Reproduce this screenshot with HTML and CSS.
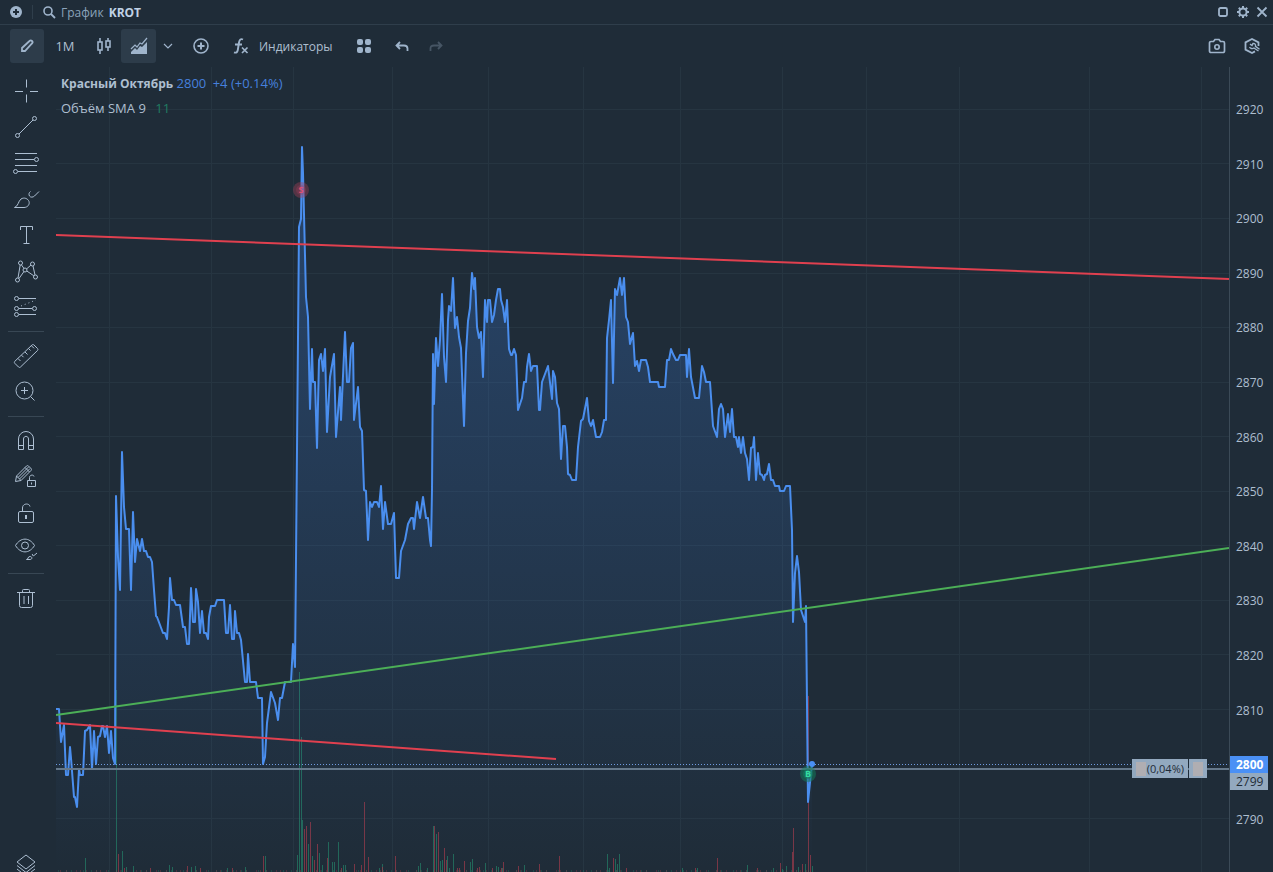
FILE: index.html
```html
<!DOCTYPE html>
<html lang="ru">
<head>
    <meta charset="UTF-8">
    <meta name="viewport" content="width=device-width, initial-scale=1.0">
    <title>График KROT</title>
    <link rel="stylesheet" href="styles.css">
</head>
<body>
    <!-- TITULO -->
    <header class="titulo">
        <button class="mini" aria-label="Добавить"><svg width="14" height="14" viewBox="0 0 14 14"><circle cx="7" cy="7" r="6" fill="#9fb4cb" stroke="none"/><path d="M7 4v6M4 7h6" stroke="#1f2c38" stroke-width="2"/></svg></button>
        <span class="divisor"></span>
        <button class="buscar">
            <svg width="14" height="14" viewBox="0 0 14 14"><circle cx="6" cy="6" r="4" stroke-width="1.600"/><path d="M9 9l4 4" stroke-width="1.800"/></svg>
            <span>График</span><b>KROT</b>
        </button>
        <div class="ventana">
            <button class="mini" aria-label="Развернуть"><svg width="14" height="14" viewBox="0 0 14 14"><rect x="3" y="3" width="8" height="8" rx="1.500" stroke-width="1.800"/></svg></button>
            <button class="mini" aria-label="Настройки"><svg width="14" height="14" viewBox="0 0 14 14"><circle cx="7" cy="7" r="3.600" stroke-width="2"/><path d="M7 1v2M7 11v2M1 7h2M11 7h2M2.800 2.800l1.400 1.400M9.800 9.800l1.400 1.400M2.800 11.200l1.400-1.400M9.800 4.200l1.400-1.400" stroke-width="2"/></svg></button>
            <button class="mini" aria-label="Закрыть"><svg width="14" height="14" viewBox="0 0 14 14"><path d="M2.500 2.500l9 9M11.500 2.500l-9 9" stroke-width="1.800"/></svg></button>
        </div>
    </header>

    <!-- BARRA -->
    <nav class="barra">
        <button class="btn activo" aria-label="Рисование"><svg width="18" height="18" viewBox="0 0 18 18"><path d="M4 14v-3l7.500-7a1.700 1.700 0 0 1 2.500 2.500L7 14z" stroke-width="1.800"/></svg></button>
        <button class="btn intervalo">1M</button>
        <button class="btn velas" aria-label="Свечи"><svg width="18" height="18" viewBox="0 0 18 18"><path d="M5 1v4M5 13v4M13 1v3M13 10v4" stroke-width="1.600"/><rect x="3" y="5" width="4" height="8" stroke-width="1.600"/><rect x="11" y="4" width="4" height="6" stroke-width="1.600"/></svg></button>
        <button class="btn area activo" aria-label="Область"><svg width="18" height="18" viewBox="0 0 18 18"><path d="M1 12l4-4 2 2 3-4 2 1 5-6" stroke-width="1.200"/><path d="M1 17v-2l4-4 2 2 3-4 2 1 5-5v12z" fill="#9fb4cb" stroke="none"/></svg></button>
        <button class="btn flecha" aria-label="Ещё"><svg width="10" height="10" viewBox="0 0 10 10"><path d="M1 3l4 4 4-4" stroke-width="1.200"/></svg></button>
        <button class="btn sep" aria-label="Сравнить"><svg width="18" height="18" viewBox="0 0 18 18"><circle cx="9" cy="9" r="7" stroke-width="1.600"/><path d="M9 5.500v7M5.500 9h7" stroke-width="2"/></svg></button>
        <button class="btn indicadores">
            <svg width="18" height="18" viewBox="0 0 18 18"><path d="M11 2.500C8.500 1.300 7.400 3 7 5.500L5.800 13c-.4 2.300-1.600 3.200-3.800 2.300M3 7.500h7" stroke-width="1.900"/><path d="M10 10.500l5.500 5.500M15.500 10.500L10 16" stroke-width="1.700"/></svg>
            Индикаторы
        </button>
        <button class="btn" aria-label="Шаблоны"><svg width="16" height="16" viewBox="0 0 16 16"><g fill="#9fb4cb" stroke="none"><rect x="1" y="1" width="6" height="6" rx="2"/><rect x="9" y="1" width="6" height="6" rx="2"/><rect x="1" y="9" width="6" height="6" rx="2"/><rect x="9" y="9" width="6" height="6" rx="2"/></g></svg></button>
        <button class="btn sep" aria-label="Отменить"><svg width="16" height="16" viewBox="0 0 16 16"><path d="M6 4L2.500 7.500 6 11M3 7.500h7c2.500 0 3.500 1 3.500 3v2.500" stroke-width="1.800"/></svg></button>
        <button class="btn" aria-label="Повторить" disabled><svg width="16" height="16" viewBox="0 0 16 16"><path d="M10 4l3.500 3.500L10 11M13 7.500H6c-2.500 0-3.500 1-3.500 3v2.500" stroke-width="1.800"/></svg></button>
        <div class="derecha">
            <button class="btn" aria-label="Снимок"><svg width="18" height="18" viewBox="0 0 18 18"><path d="M3 4.500h2.500L7 2.500h4l1.500 2H15a1.500 1.500 0 0 1 1.500 1.500v8a1.500 1.500 0 0 1-1.500 1.500H3A1.500 1.500 0 0 1 1.500 14V6A1.500 1.500 0 0 1 3 4.500z" stroke-width="1.700"/><circle cx="9" cy="10" r="2.200" stroke-width="1.600"/></svg></button>
            <button class="btn" aria-label="Сервис"><svg width="18" height="18" viewBox="0 0 18 18"><path d="M15.500 9V5.400L9 2 2.500 5.400v7.200L9 16l3-1.600" stroke-width="1.800"/><path d="M6.500 10c1 1.700 3 2 4.500 1l4.500 3M7 7.200l2 1.300 1-2.100c1.800-.2 3 1.200 2.500 3l4 2.800" stroke-width="1.400"/></svg></button>
        </div>
    </nav>

    <main class="principal">
        <!-- HERRAMIENTAS -->
        <aside class="lateral">
            <button class="tool" aria-label="Перекрестие"><svg width="28" height="28" viewBox="0 0 28 28"><path d="M14.500 2.500v8M14.500 17.500v8M3 14.500h8M18 14.500h8"/></svg></button>
            <button class="tool" aria-label="Линия"><svg width="28" height="28" viewBox="0 0 28 28"><circle cx="5.500" cy="22.500" r="2"/><circle cx="22.500" cy="5.500" r="2"/><path d="M7 21L21 7"/></svg></button>
            <button class="tool" aria-label="Уровни"><svg width="28" height="28" viewBox="0 0 28 28"><path d="M3 4.500h22M3 10.500h19M3 16.500h22M6 22.500h19"/><circle cx="24.500" cy="10.500" r="2"/><circle cx="3.500" cy="22.500" r="2"/></svg></button>
            <button class="tool" aria-label="Кисть"><svg width="28" height="28" viewBox="0 0 28 28"><path d="M2.500 22.500c4-1.500 3.500-6 6.500-8.500 3-2 7-.5 8 2.500s-1.500 6-5 6zM27 6.500L22.500 11c-1.500 1.500-4 1.500-5 0s-.5-3.500 1-4.500"/></svg></button>
            <button class="tool" aria-label="Текст"><svg width="28" height="28" viewBox="0 0 28 28"><path d="M8.500 9V5.500h12V9M14.500 5.500v17M11.500 22.500h6"/></svg></button>
            <button class="tool" aria-label="Фигуры"><svg width="28" height="28" viewBox="0 0 28 28"><circle cx="8.500" cy="6" r="2"/><circle cx="20.500" cy="7" r="2"/><circle cx="5.500" cy="23" r="2"/><circle cx="23.500" cy="20" r="2"/><circle cx="13" cy="13" r="2"/><path d="M8.200 8L6 21M9.500 8l2.500 3.500M7 21.500l5-7M14.500 12l4.500-4M14.800 14l7 4.800M21 9l2 9"/></svg></button>
            <button class="tool" aria-label="Прогноз"><svg width="28" height="28" viewBox="0 0 28 28"><circle cx="4.500" cy="5.500" r="2"/><circle cx="4.500" cy="15.500" r="2"/><circle cx="22.500" cy="15.500" r="2"/><circle cx="4.500" cy="21.500" r="2"/><path d="M7 5.500h17M7 15.500h13M7 21.500h17"/><path d="M9 13L24 7" stroke-dasharray="1 3"/></svg></button>
            <hr>
            <button class="tool" aria-label="Линейка"><svg width="28" height="28" viewBox="0 0 28 28"><path d="M2.800 19.300L20 3c.6-.6 1.400-.6 2 0l3.500 3.500c.6.6.6 1.400 0 2L8.500 25c-.6.6-1.400.6-2 0l-3.700-3.700c-.6-.6-.6-1.400 0-2zM6 16.500l2.500 2.500M9.500 13.200l2 2M13 10l2.500 2.500M16.500 6.500l2 2M19.500 3.800L22 6.300"/></svg></button>
            <button class="tool" aria-label="Увеличить"><svg width="28" height="28" viewBox="0 0 28 28"><circle cx="12.500" cy="12.500" r="8.500"/><path d="M12.500 9v7M9 12.500h7M18.500 18.500l4 4"/></svg></button>
            <hr>
            <button class="tool" aria-label="Магнит"><svg width="28" height="28" viewBox="0 0 28 28"><path d="M6.500 22.500V12a7.500 7.500 0 0 1 15 0v10.500h-5V12c0-3.500-5-3.500-5 0v10.500zM6.500 18.500h5M16.500 18.500h5"/></svg></button>
            <button class="tool" aria-label="Режим рисования"><svg width="28" height="28" viewBox="0 0 28 28"><path d="M3.500 18.500l1-5.500L14.500 3c.7-.6 1.300-.6 2 0l2.500 2.500c.6.7.6 1.300 0 2L9 17.500zM4.500 13L9 17.500M6 14.500L16.500 4M7.500 16L18 5.500M13 4.500L17.500 9"/><path d="M15.500 17.500h8v6h-8zM17.500 17.500v-3c0-3 4.500-3 4.500-1M19.500 19.500v2"/></svg></button>
            <button class="tool" aria-label="Блокировка"><svg width="28" height="28" viewBox="0 0 28 28"><rect x="6.500" y="12.500" width="15" height="11" rx="1.500"/><path d="M10.500 12.500V9c0-5 7-5 7.500-1.500"/><path d="M14 16v4" stroke-width="2"/></svg></button>
            <button class="tool" aria-label="Показать"><svg width="28" height="28" viewBox="0 0 28 28"><path d="M3.500 10.500c5-8.500 14-8.500 19 0-5 8.500-14 8.500-19 0z"/><circle cx="13" cy="10.500" r="3.500"/><path d="M14.500 24.500c2 0 1-3 3.500-3s2.500 3 0 3zM25 18l-3 2.500c-1 .5-2 0-1.500-1.500"/></svg></button>
            <hr>
            <button class="tool" aria-label="Удалить"><svg width="28" height="28" viewBox="0 0 28 28"><path d="M5 8.500h18M7.500 8.500v13a2 2 0 0 0 2 2h9a2 2 0 0 0 2-2v-13M10.500 8.500v-2c0-1 .5-1 1-1h5c.5 0 1 0 1 1v2M12 12v8M16.500 12v8"/></svg></button>
            <button class="tool capas" aria-label="Слои"><svg width="28" height="28" viewBox="0 0 28 28"><path d="M5 11l9-7 9 7-9 7zM5 14.500l9 7 9-7M5 18l9 7 9-7"/></svg></button>
        </aside>

        <!-- GRAFICO -->
        <section class="grafico">
            <svg class="lienzo" viewBox="56 67 1173 805" preserveAspectRatio="none">
                <defs>
                    <linearGradient id="relleno" gradientUnits="userSpaceOnUse" x1="0" y1="147" x2="0" y2="872">
                        <stop offset="0" stop-color="#3f84e8" stop-opacity=".3"/>
                        <stop offset="1" stop-color="#3f84e8" stop-opacity="0"/>
                    </linearGradient>
                </defs>
                <path class="rejilla" d="M56 109.500H1229M56 163.500H1229M56 218.500H1229M56 273.500H1229M56 327.500H1229M56 382.500H1229M56 436.500H1229M56 491.500H1229M56 545.500H1229M56 600.500H1229M56 654.500H1229M56 709.500H1229M56 818.500H1229M109.500 67V872M211.500 67V872M293.500 67V872M392.500 67V872M488.500 67V872M583.500 67V872M680.500 67V872M782.500 67V872M866.500 67V872M959.500 67V872M1089.500 67V872M1201.500 67V872"/>

                <!-- volumen -->
                <path class="vol sube" d="M85.500 872V858M116.500 872V690M122.500 872V851M126.500 872V867M133.500 872V866M169.500 872V865M172.500 872V867M191.500 872V867M195.500 872V866M227.500 872V868M245.500 872V867M265.500 872V856M297.500 872V855M299.500 872V672M301.500 872V737M302.500 872V820M308.500 872V844M312.500 872V856M319.500 872V853M322.500 872V865M328.500 872V842M332.500 872V862M334.500 872V862M338.500 872V842M343.500 872V865M345.500 872V865M379.500 872V868M382.500 872V864M418.500 872V866M420.500 872V863M427.500 872V868M433.500 872V826M436.500 872V834M440.500 872V861M442.500 872V860M447.500 872V856M449.500 872V868M453.500 872V854M470.500 872V862M472.500 872V859M485.500 872V863M496.500 872V866M498.500 872V867M502.500 872V868M524.500 872V865M607.500 872V854M609.500 872V868M615.500 872V859M617.500 872V864M619.500 872V854M682.500 872V868M697.500 872V868M747.500 872V865M773.500 872V868M782.500 872V869M786.500 872V866M798.500 872V867M805.500 872V864M812.500 872V866"/>
                <path class="vol baja" d="M118.500 872V854M124.500 872V868M150.500 872V868M187.500 872V866M200.500 872V868M232.500 872V868M263.500 872V856M304.500 872V829M306.500 872V826M310.500 872V822M314.500 872V860M317.500 872V844M327.500 872V858M341.500 872V868M354.500 872V864M361.500 872V865M364.500 872V802M368.500 872V857M382.500 872V867M395.500 872V856M434.500 872V826M438.500 872V832M444.500 872V848M446.500 872V860M457.500 872V868M459.500 872V868M464.500 872V861M477.500 872V868M479.500 872V867M492.500 872V868M501.500 872V868M503.500 872V862M518.500 872V866M539.500 872V864M559.500 872V856M613.500 872V858M626.500 872V868M695.500 872V868M717.500 872V858M757.500 872V868M780.500 872V863M792.500 872V852M793.500 872V828M802.500 872V864M808.500 872V696M810.500 872V855"/>
                <path class="vol sube" d="M58 871H815" stroke-dasharray="1 7 1 4 1 11"/>
                <path class="vol baja" d="M60 871H815" stroke-dasharray="1 5 1 9 1 3"/>

                <!-- precio -->
                <path fill="url(#relleno)" d="M56 709L59 709 61 742 64 725 66 775 68 775 70 747 71 758 74 797 75 797 77 807 79 769 80 775 83 775 85 731 87 730 90 725 92 769 94 731 96 764 98 737 100 736 102 726 103 726 105 737 107 726 109 753 111 731 113 758 115 764 116 496 118 557 120 590 122 452 124 507 126 529 129 529 131 590 133 512 135 562 137 539 140 551 142 539 144 551 146 551 148 557 150 557 152 562 154 590 156 616 157 617 163 633 165 633 167 639 169 607 170 578 172 600 174 600 176 605 180 605 183 627 185 627 187 644 189 644 191 588 193 622 195 622 196 589 198 602 200 633 202 611 204 633 206 633 208 639 209 617 211 606 215 606 217 600 224 600 226 633 228 633 230 605 232 639 234 639 235 611 237 633 239 633 241 640 245 682 247 682 248 654 250 682 256 682 258 698 262 698 263 764 265 757 267 723 271 692 275 703 278 720 280 698 282 698 285 682 291 682 293 644 295 667 297 450 299 227 301 219 302 147 303 173 306 297 308 317 310 409 312 349 313 382 315 382 317 448 319 360 321 354 323 371 325 349 327 432 330 377 334 354 336 437 340 387 341 420 345 332 347 382 349 382 351 348 353 343 354 420 358 387 360 427 362 431 364 490 366 491 368 540 370 502 372 507 374 502 377 502 379 507 381 486 383 529 385 502 388 524 391 524 394 513 396 578 399 578 401 551 405 540 408 524 411 518 413 518 414 529 417 502 420 518 423 497 426 518 428 518 430 540 431 546 432 490 433 354 434 404 436 338 438 366 440 340 442 294 444 357 446 382 448 320 449 306 451 311 453 278 455 328 457 317 459 337 461 348 464 426 466 353 468 321 470 308 472 273 474 289 475 278 477 327 479 338 481 332 483 377 485 300 487 322 488 300 490 300 492 322 494 315 496 300 498 289 500 289 501 300 503 307 505 322 507 300 509 349 511 355 512 355 514 349 516 355 518 410 522 398 524 382 526 382 527 367 529 354 531 371 533 366 537 366 539 410 540 410 542 382 548 366 552 399 553 371 555 377 557 403 559 409 561 459 563 426 565 426 567 447 568 474 570 475 572 480 576 480 578 447 581 421 583 419 587 398 589 421 591 426 593 420 596 437 600 437 602 432 604 420 606 420 607 338 609 320 611 300 613 383 615 289 617 295 620 278 622 295 624 278 626 317 628 322 630 344 633 333 635 366 637 361 639 371 641 360 646 360 648 367 650 382 658 382 659 387 665 387 667 360 669 360 671 349 673 354 676 360 678 360 680 355 686 355 687 377 689 349 691 377 695 398 699 398 702 366 704 372 706 382 710 382 713 426 717 437 719 409 721 404 723 409 725 437 728 414 730 432 732 409 734 437 736 437 738 447 739 437 741 453 743 437 745 453 747 459 749 480 751 448 753 447 754 437 756 480 758 453 760 474 762 475 764 480 765 475 767 474 769 464 771 480 773 480 775 486 779 486 780 491 784 491 786 486 790 486 792 530 793 622 795 573 797 556 799 572 801 610 805 622 806 606 808 802 811 773 812 764V872H56z"/>
                <path class="linea precio" d="M56 709L59 709 61 742 64 725 66 775 68 775 70 747 71 758 74 797 75 797 77 807 79 769 80 775 83 775 85 731 87 730 90 725 92 769 94 731 96 764 98 737 100 736 102 726 103 726 105 737 107 726 109 753 111 731 113 758 115 764 116 496 118 557 120 590 122 452 124 507 126 529 129 529 131 590 133 512 135 562 137 539 140 551 142 539 144 551 146 551 148 557 150 557 152 562 154 590 156 616 157 617 163 633 165 633 167 639 169 607 170 578 172 600 174 600 176 605 180 605 183 627 185 627 187 644 189 644 191 588 193 622 195 622 196 589 198 602 200 633 202 611 204 633 206 633 208 639 209 617 211 606 215 606 217 600 224 600 226 633 228 633 230 605 232 639 234 639 235 611 237 633 239 633 241 640 245 682 247 682 248 654 250 682 256 682 258 698 262 698 263 764 265 757 267 723 271 692 275 703 278 720 280 698 282 698 285 682 291 682 293 644 295 667 297 450 299 227 301 219 302 147 303 173 306 297 308 317 310 409 312 349 313 382 315 382 317 448 319 360 321 354 323 371 325 349 327 432 330 377 334 354 336 437 340 387 341 420 345 332 347 382 349 382 351 348 353 343 354 420 358 387 360 427 362 431 364 490 366 491 368 540 370 502 372 507 374 502 377 502 379 507 381 486 383 529 385 502 388 524 391 524 394 513 396 578 399 578 401 551 405 540 408 524 411 518 413 518 414 529 417 502 420 518 423 497 426 518 428 518 430 540 431 546 432 490 433 354 434 404 436 338 438 366 440 340 442 294 444 357 446 382 448 320 449 306 451 311 453 278 455 328 457 317 459 337 461 348 464 426 466 353 468 321 470 308 472 273 474 289 475 278 477 327 479 338 481 332 483 377 485 300 487 322 488 300 490 300 492 322 494 315 496 300 498 289 500 289 501 300 503 307 505 322 507 300 509 349 511 355 512 355 514 349 516 355 518 410 522 398 524 382 526 382 527 367 529 354 531 371 533 366 537 366 539 410 540 410 542 382 548 366 552 399 553 371 555 377 557 403 559 409 561 459 563 426 565 426 567 447 568 474 570 475 572 480 576 480 578 447 581 421 583 419 587 398 589 421 591 426 593 420 596 437 600 437 602 432 604 420 606 420 607 338 609 320 611 300 613 383 615 289 617 295 620 278 622 295 624 278 626 317 628 322 630 344 633 333 635 366 637 361 639 371 641 360 646 360 648 367 650 382 658 382 659 387 665 387 667 360 669 360 671 349 673 354 676 360 678 360 680 355 686 355 687 377 689 349 691 377 695 398 699 398 702 366 704 372 706 382 710 382 713 426 717 437 719 409 721 404 723 409 725 437 728 414 730 432 732 409 734 437 736 437 738 447 739 437 741 453 743 437 745 453 747 459 749 480 751 448 753 447 754 437 756 480 758 453 760 474 762 475 764 480 765 475 767 474 769 464 771 480 773 480 775 486 779 486 780 491 784 491 786 486 790 486 792 530 793 622 795 573 797 556 799 572 801 610 805 622 806 606 808 802 811 773 812 764"/>

                <path class="linea roja" d="M56 235L1229 279M56 723L556 759"/>
                <path class="linea verde" d="M56 715L1229 548"/>
                <path class="ultimo" d="M56 764.500H1229"/>
                <path class="orden-linea" d="M56 769H1229"/>
                <circle cx="812" cy="764" r="3" fill="#4a90f5"/>

                <!-- operaciones -->
                <circle cx="301" cy="190" r="8" fill="#a8405a" fill-opacity=".4"/>
                <circle cx="301" cy="190" r="5" fill="#a8405a" fill-opacity=".3"/>
                <text class="marca venta" x="301" y="193">S</text>
                <circle cx="808" cy="774" r="8" fill="#12805e" fill-opacity=".5"/>
                <circle cx="808" cy="774" r="5" fill="#12805e" fill-opacity=".6"/>
                <text class="marca compra" x="808" y="777">B</text>
            </svg>
            <div class="leyenda">
                <p><b>Красный Октябрь</b> <span class="azul">2800</span> <span class="azul cambio">+4 (+0.14%)</span></p>
                <p>Объём SMA 9 <span class="media">11</span></p>
            </div>
            <div class="orden">
                <span class="pnl"><i></i>(0,04%)</span>
                <span class="cerrar"><i></i></span>
            </div>
        </section>

        <!-- PRECIOS -->
        <ol class="escala">
            <li>2920</li>
            <li>2910</li>
            <li>2900</li>
            <li>2890</li>
            <li>2880</li>
            <li>2870</li>
            <li>2860</li>
            <li>2850</li>
            <li>2840</li>
            <li>2830</li>
            <li>2820</li>
            <li>2810</li>
            <li class="actual">2800<span class="limite">2799</span></li>
            <li>2790</li>
        </ol>
    </main>
</body>
</html>
```

FILE: styles.css
```css
* {
    box-sizing: border-box;
}
body {
    margin: 0;
    height: 100vh;
    display: flex;
    flex-direction: column;
    overflow: hidden;
    background-color: #1f2c38;
    color: #aebfd0;
    font-family: "Open Sans", "Noto Sans", sans-serif;
    font-size: 12px;
}
button {
    display: flex;
    align-items: center;
    justify-content: center;
    margin: 0;
    padding: 0;
    border: 0;
    background: none;
    color: inherit;
    font: inherit;
    cursor: pointer;
}
button svg {
    flex: none;
    fill: none;
    stroke: #9fb4cb;
}

/* titulo */
.titulo {
    display: flex;
    align-items: center;
    flex: none;
    height: 25px;
    padding: 0 3px 0 6px;
    border-bottom: 1px solid #2f3e4b;
}
.mini {
    width: 20px;
    height: 20px;
}
.divisor {
    width: 1px;
    height: 14px;
    margin: 0 9px 0 6px;
    background-color: #2f3e4b;
}
.buscar {
    gap: 5px;
    color: #8ba3ba;
}
.buscar b {
    color: #c0d2e6;
}
.ventana {
    display: flex;
    margin-left: auto;
}
.ventana .mini:last-child {
    width: 17px;
}

/* barra */
.barra {
    display: flex;
    flex: none;
    height: 42px;
    padding: 4px 4px 4px 10px;
}
.btn {
    width: 34px;
    height: 34px;
    border-radius: 3px;
}
.btn:hover, .activo {
    background-color: #2d3c4a;
}
.btn:disabled {
    opacity: .3;
}
.intervalo {
    width: 42px;
    font-size: 13px;
}
.velas, .area {
    width: 35px;
}
.flecha {
    width: 24px;
}
.sep {
    margin-left: 4px;
}
.indicadores {
    width: auto;
    padding: 0 14px;
    gap: 9px;
}
.derecha {
    display: flex;
    gap: 1px;
    margin-left: auto;
}

/* herramientas */
.principal {
    display: flex;
    flex: 1;
    min-height: 0;
}
.lateral {
    display: flex;
    flex-direction: column;
    flex: none;
    width: 56px;
    padding: 6px 12px 0 8px;
}
.tool {
    flex: none;
    height: 36px;
}
.tool svg {
    stroke: #adbfd2;
}
.lateral hr {
    width: 100%;
    height: 1px;
    flex: none;
    margin: 6px 0;
    border: 0;
    background-color: #384754;
}
.capas {
    margin-top: auto;
    margin-bottom: -11px;
}

/* grafico */
.grafico {
    position: relative;
    flex: 1;
    min-width: 0;
}
.lienzo {
    display: block;
    width: 100%;
    height: 100%;
}
.rejilla {
    fill: none;
    stroke: #263541;
}
.vol {
    fill: none;
    opacity: .7;
}
.sube {
    stroke: #238068;
}
.baja {
    stroke: #a03a4c;
}
.linea {
    fill: none;
    stroke-width: 2;
    stroke-linejoin: round;
}
.precio {
    stroke: #4a8eee;
}
.roja {
    stroke: #e0404f;
}
.verde {
    stroke: #4caf57;
}
.ultimo {
    stroke: #6f9be0;
    stroke-dasharray: 1 2;
}
.orden-linea {
    stroke: #66798b;
    stroke-width: 2;
}
.marca {
    font-size: 9px;
    font-weight: bold;
    text-anchor: middle;
}
.venta {
    fill: #e0506e;
}
.compra {
    fill: #35dca0;
}
.leyenda {
    position: absolute;
    top: 4px;
    left: 5px;
    font-size: 13px;
}
.leyenda p {
    margin: 0;
    line-height: 24px;
}
.leyenda b {
    font-size: 12px;
}
.azul {
    color: #4680dc;
}
.cambio {
    margin-left: 3px;
}
.media {
    margin-left: 6px;
    color: #1f7d62;
}
.orden {
    position: absolute;
    right: 22px;
    bottom: 94px;
    display: flex;
    gap: 1px;
    color: #1f2c38;
    font-size: 11px;
}
.orden span {
    display: flex;
    align-items: center;
    height: 19px;
    padding: 0 4px;
    gap: 1px;
    background-color: #93a9bf;
}
.orden i {
    width: 10px;
    height: 14px;
    background-color: #b0aeb2;
}

/* precios */
.escala {
    display: flex;
    flex-direction: column;
    justify-content: space-between;
    flex: none;
    width: 44px;
    margin: 0;
    padding: 34px 5px 44px 0;
    border-left: 1px solid #3b4a57;
    list-style: none;
}
.escala li {
    height: 17px;
    padding-left: 6px;
    line-height: 17px;
}
.escala .actual {
    position: relative;
    background-color: #4a90f5;
    color: #fff;
    font-weight: bold;
}
.limite {
    position: absolute;
    top: 17px;
    left: 0;
    width: 100%;
    padding-left: 6px;
    background-color: #93a9bf;
    color: #1f2c38;
    font-weight: normal;
}
```
